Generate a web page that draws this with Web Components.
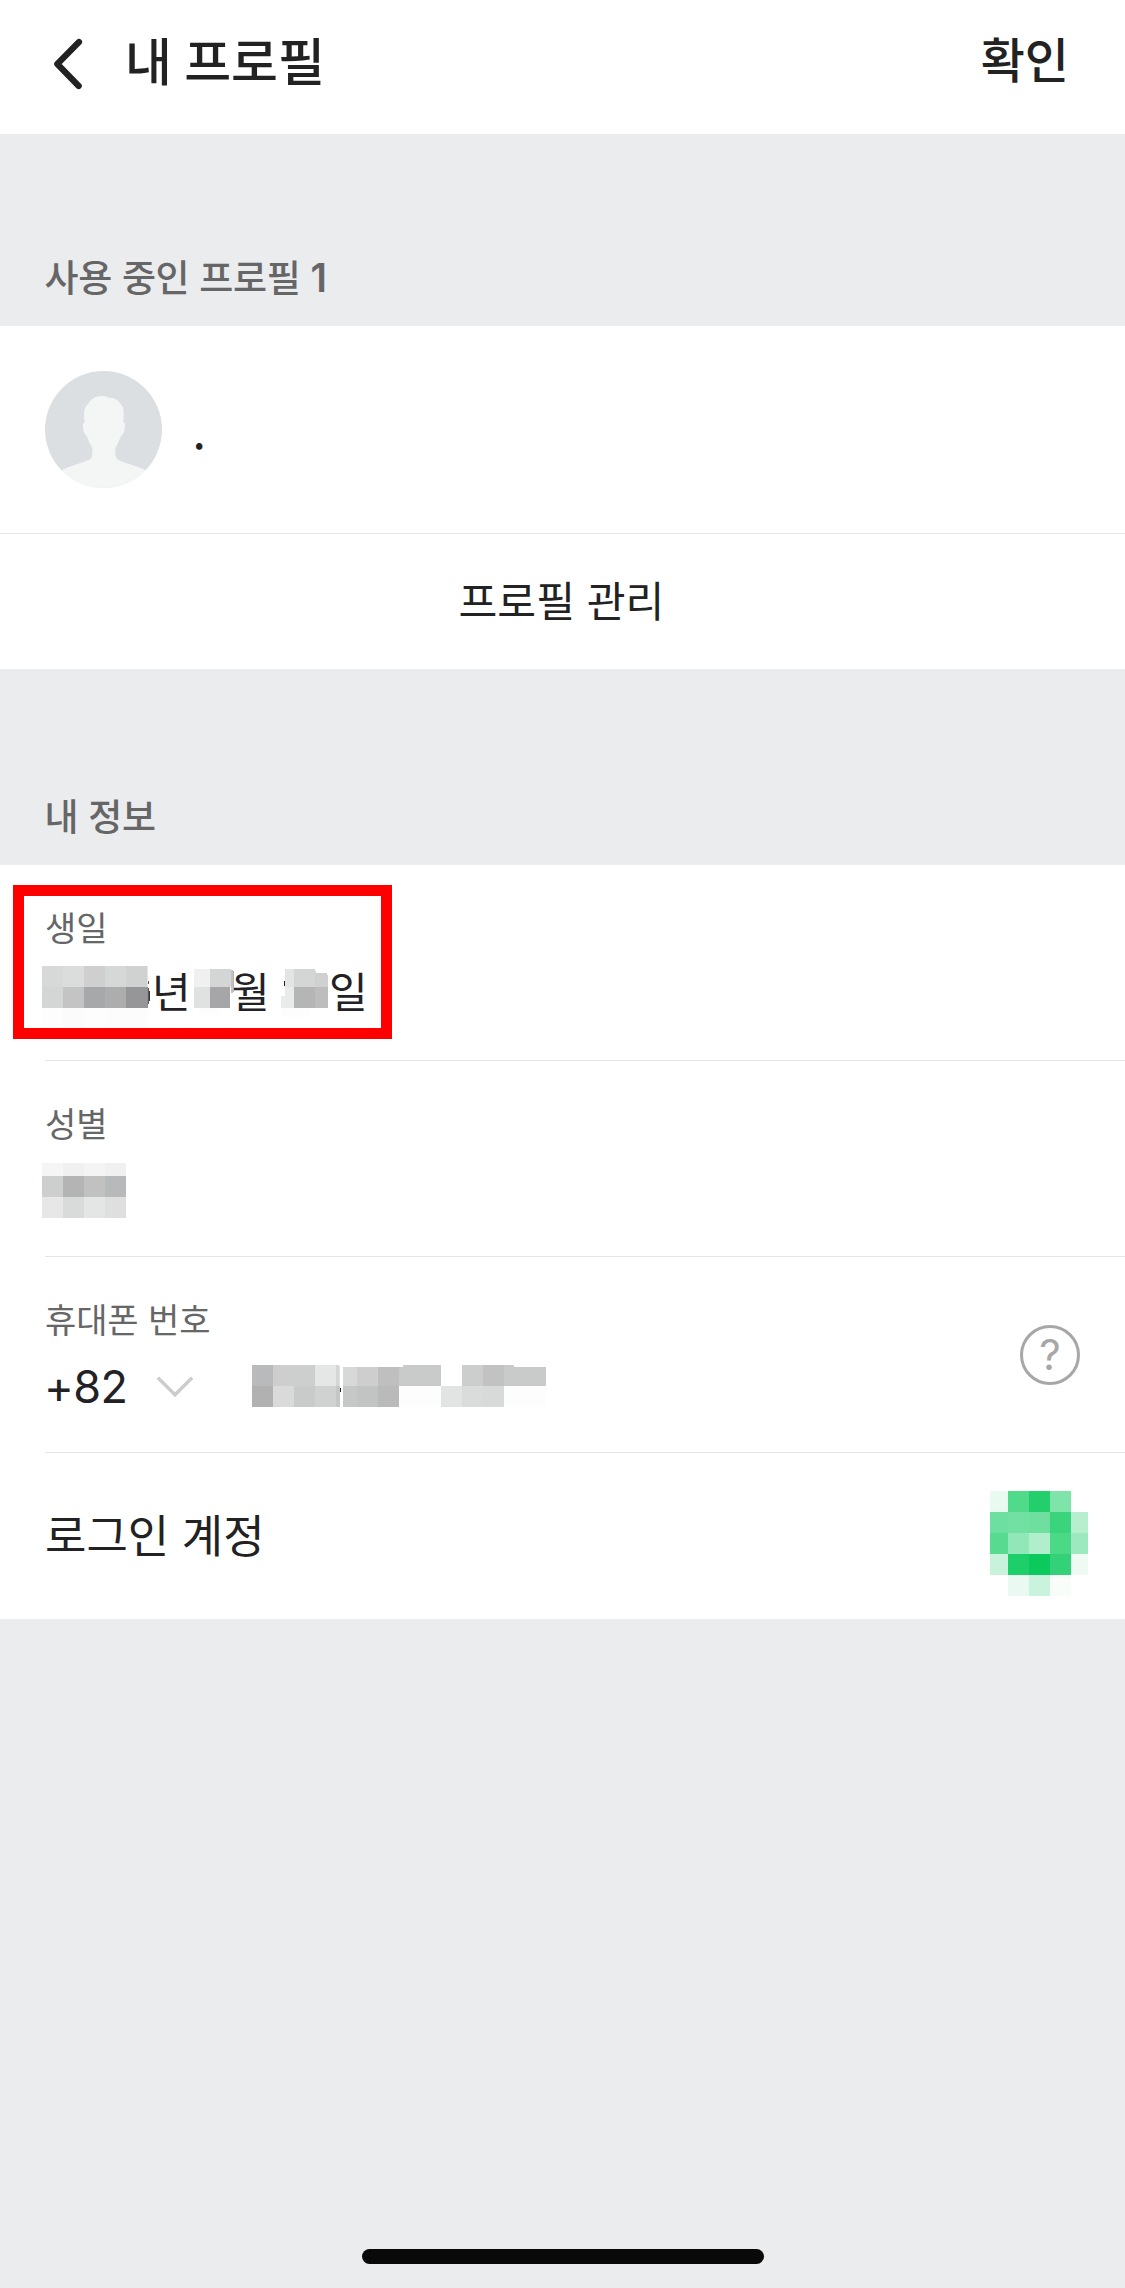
<!DOCTYPE html>
<html lang="ko">
<head>
<meta charset="utf-8">
<title>내 프로필</title>
<style>
html, body { margin: 0; background: #ebecee; }
body { width: 1125px; height: 2288px; overflow: hidden; font-family: "Noto Sans CJK KR", "Liberation Sans", sans-serif; color: #222; }
</style>
</head>
<body>
<profile-page></profile-page>
<script>
const define = (name, html, setup) => customElements.define(name, class extends HTMLElement {
  constructor() {
    super();
    this.attachShadow({ mode: 'open' }).innerHTML = html;
  }
  connectedCallback() { if (setup) setup(this, this.shadowRoot); }
});

/* Cells are [x, y, width, height, colour]; w and h give the size in the flow. */
const mosaics = {
  year: { w: 110, h: 62, cells: [
    [0,0,21,21,'#d7d9d8'],[21,0,21,21,'#dbdddc'],[42,0,21,21,'#cfcfcf'],[63,0,21,21,'#d6d8d7'],[84,0,21,21,'#d0d2d1'],[105,0,1,21,'#e4e5e5'],
    [106,15,1,3,'#55555a'],[105,21,1,21,'#8f8f91'],[106,22,1,16,'#55555a'],[107,25,1,10,'#333338'],
    [0,21,21,21,'#d4d6d5'],[21,21,21,21,'#c4c4c4'],[42,21,21,21,'#a7a8aa'],[63,21,21,21,'#adadad'],[84,21,21,21,'#969698'],
    [0,42,21,20,'#fdfdfd'],[21,42,21,20,'#fbfbfb'],[42,42,21,20,'#fdfdfd'],[63,42,43,20,'#fcfcfc']] },
  month: { w: 37, h: 62, cells: [
    [0,3,16,18,'#f0f0f0'],[16,3,21,18,'#d4d6d5'],[37,4,2,23,'#c2c2c2'],[39,5,1,21,'#b4b4b4'],
    [0,21,16,21,'#e0e2e1'],[16,21,20,21,'#a6a6a8'],[5,42,20,7,'#fdfdfd']] },
  day: { w: 48, h: 62, cells: [
    [3,15,1,5,'#222'],[4,3,9,18,'#e4e4e4'],[13,3,21,18,'#d4d6d5'],[34,5,1,16,'#d0d0d0'],[35,7,11,14,'#d0d0d0'],[46,9,1,12,'#d0d0d0'],
    [4,21,9,21,'#e9ebea'],[0,30,4,12,'#e9ebea'],[13,21,21,21,'#b5b5b5'],[34,21,13,21,'#bdbdbd'],[0,42,28,9,'#fdfdfd']] },
  gender: { w: 84, h: 55, cells: [
    [0,0,21,13,'#f5f5f5'],[21,0,21,13,'#f0f0f0'],[42,0,21,13,'#f4f4f4'],[63,0,21,13,'#f0f0f0'],
    [0,13,21,21,'#cdcfce'],[21,13,21,21,'#b4b4b4'],[42,13,21,21,'#c1c1c1'],[63,13,21,21,'#b8b9bb'],
    [0,34,21,21,'#e7e7e7'],[21,34,21,21,'#d9dbda'],[42,34,21,21,'#e4e6e5'],[63,34,21,21,'#dfdfdf']] },
  phone: { w: 298, h: 42, cells: [
    [0,0,4,42,'#fdfdfd'],
    [4,0,21,21,'#b9babc'],[25,0,21,21,'#cecece'],[46,0,21,21,'#cdcfce'],[67,0,21,21,'#e5e7e6'],[88,0,3,21,'#d4d5d5'],[91,1,1,20,'#e0e0e0'],
    [4,21,21,21,'#b1b1b1'],[25,21,21,21,'#dadada'],[46,21,21,21,'#c9cbca'],[67,21,21,21,'#d0d2d1'],[88,21,4,21,'#c5c7c6'],[92,23,1,4,'#222'],
    [95,2,14,19,'#d7d9d8'],[109,2,21,19,'#cecece'],[130,2,21,19,'#bfbfbf'],[151,2,4,19,'#c9cbca'],[155,0,38,21,'#c9cbca'],[151,2,3,2,'#c5c5c5'],
    [95,21,14,21,'#c6c8c7'],[109,21,21,21,'#c2c4c3'],[130,21,21,21,'#bababa'],[151,21,42,21,'#fdfdfd'],
    [214,0,21,21,'#cccecd'],[235,0,21,21,'#c2c2c2'],[256,0,10,21,'#c9cbca'],[266,2,32,19,'#c9cbca'],
    [193,21,21,21,'#e2e4e3'],[214,21,21,21,'#dadcdb'],[235,21,21,21,'#d8dad9'],[256,21,42,21,'#fdfdfd']] },
  account: { w: 98, h: 105, cells: [
    [0,0,18,21,'#e9faf0'],[18,0,21,21,'#52da8b'],[39,0,21,21,'#22cf6b'],[60,0,21,21,'#7ee4a9'],
    [0,21,18,21,'#6ddfa0'],[18,21,21,21,'#72e0a3'],[39,21,21,21,'#6fdf9f'],[60,21,21,21,'#39d47b'],[81,21,17,21,'#b5efce'],
    [0,42,18,21,'#58da91'],[18,42,21,21,'#91e7b7'],[39,42,21,21,'#b1eecb'],[60,42,21,21,'#4bd887'],[81,42,17,21,'#9de9bf'],
    [0,63,18,21,'#c8f3da'],[18,63,21,21,'#1dcf69'],[39,63,21,21,'#0bc95d'],[60,63,21,21,'#34d278'],[81,63,17,21,'#f0faf5'],
    [18,84,21,21,'#eafaf2'],[39,84,21,21,'#c9f3dc'],[60,84,21,21,'#f8fdfa']] }
};
define('mosaic-patch', `<style>:host{display:block;flex:none;position:relative;z-index:1}svg{display:block;overflow:visible}</style>`, (el, root) => {
  const m = mosaics[el.getAttribute('name')];
  root.innerHTML += `<svg width="${m.w}" height="${m.h}" shape-rendering="crispEdges">${m.cells.map(c =>
    `<rect x="${c[0]}" y="${c[1]}" width="${c[2]}" height="${c[3]}" fill="${c[4]}"/>`).join('')}</svg>`;
});

define('top-bar', `<style>
:host{display:flex;align-items:center;height:134px;background:#fff;box-sizing:border-box;padding:0 56px 16px 50px}
svg{display:block;flex:none;margin-top:10px}
h1{margin:0 auto 0 39px;font-size:51px;font-weight:500;line-height:70px;word-spacing:-2px;white-space:nowrap}
button{all:unset;font-size:48px;font-weight:500;line-height:70px;margin-top:-4px}
</style>
<svg width="36" height="54" viewBox="50 37 36 54"><path d="M79 42L57.3 64L78.7 86" fill="none" stroke="#222" stroke-width="6.2" stroke-linecap="round" stroke-linejoin="round"/></svg>
<h1><slot></slot></h1><button><slot name="action"></slot></button>`);

define('section-title', `<style>
:host{display:flex;align-items:flex-end;box-sizing:border-box;padding:0 45px 23px 44.5px;color:#666}
h2{margin:0;font-size:37px;font-weight:500;line-height:54px;letter-spacing:-.35px;white-space:nowrap}
::slotted(b){font-family:Inter,sans-serif;font-size:39px;font-weight:600;line-height:0}
</style><h2><slot></slot></h2>`);

define('user-avatar', `<style>:host{display:block;flex:none}svg{display:block}</style>
<svg width="117" height="117" viewBox="135 153 351 351"><defs><clipPath id="c"><circle cx="310.5" cy="328.5" r="175.5"/></clipPath></defs>
<g clip-path="url(#c)"><rect x="135" y="153" width="351" height="351" fill="#dbdfe2"/>
<path fill="#f4f6f6" d="M187 450C207 438 244 431 270 418C277 412 278 400 277 383C270 370 264 362 262 350C253 343 248 330 249 312Q250 308 255 307C250 290 252 270 257 260C270 245 278 228 305 228C318 228 322 233 330 234C345 233 352 240 360 249C375 265 372 285 369 307Q374 306 375 312C375 330 370 345 361 350C358 362 353 373 346 384C345 400 346 412 354 419C380 432 415 438 436 450V504H187Z"/></g></svg>`);

define('profile-card', `<style>
:host{display:block;background:#fff}
.who{display:flex;align-items:center;height:207px;padding:0 45px;border-bottom:1px solid #e5e5e5}
.name{margin-left:30.5px;font-size:48px;line-height:60px;margin-top:-1px}
.manage{display:flex;justify-content:center;align-items:center;height:135px;font-size:42.2px;line-height:60px;box-sizing:border-box;padding-bottom:6px;padding-right:2px}
</style><div class="who"><user-avatar></user-avatar><div class="name"><slot name="name"></slot></div></div>
<div class="manage"><slot></slot></div>`);

define('info-row', `<style>
:host{display:flex;position:relative;height:196px;padding-left:45px;background:#fff}
.inner{flex:1;display:flex;align-items:center;justify-content:space-between;border-bottom:1px solid #e5e5e5;padding-right:45px}
.main{align-self:flex-start;padding-top:42px}
.label{font-size:34px;line-height:40px;color:#666;letter-spacing:-.1px;white-space:nowrap}
.value{display:flex;margin-top:19px;font-size:42px;line-height:47px}
</style><div class="inner"><div class="main"><div class="label"><slot name="label"></slot></div><div class="value"><slot></slot></div></div><slot name="end"></slot></div><slot name="mark"></slot>`);

define('birth-date', `<style>:host{display:flex;height:44px;margin-left:-3px;color:#222226}
span{display:block;flex:none;width:39px;white-space:nowrap}</style>
<mosaic-patch name="year"></mosaic-patch><span>년</span>
<mosaic-patch name="month" style="margin-left:3px"></mosaic-patch><span>월</span>
<mosaic-patch name="day" style="margin-left:11px"></mosaic-patch><span>일</span>`);

define('highlight-frame', `<style>:host{position:absolute;z-index:2;left:13px;top:20px;width:379px;height:154px;box-sizing:border-box;border:11px solid #f00}</style>`);

define('country-code', `<style>:host{display:flex;align-items:center;height:58px;margin-left:-1px}
b{font:400 45px Inter,sans-serif;line-height:60px;letter-spacing:-.6px;width:113px;color:#222226}svg{display:block}</style>
<b><slot></slot></b><svg width="36" height="24" viewBox="0 0 36 24"><path d="M.9 2.7L18 19.8L35.1 2.7" fill="none" stroke="#ccc" stroke-width="3.4"/></svg>`);

define('help-button', `<style>:host{display:flex;align-items:center;justify-content:center;flex:none;box-sizing:border-box;width:60px;height:60px;border:3px solid #a7a7a7;border-radius:50%;color:#a7a7a7;font:400 42px/54px Inter,sans-serif}</style><span>?</span>`);

define('account-row', `<style>:host{display:flex;justify-content:space-between;height:166px;box-sizing:border-box;padding:0 37px 0 45px;background:#fff}
div{font-size:45px;line-height:162px}mosaic-patch{margin-top:38px}</style><div><slot></slot></div><mosaic-patch name="account"></mosaic-patch>`);

define('home-indicator', `<style>:host{display:block;width:402px;height:15px;border-radius:8px;background:#090909;margin:auto auto 24px 362px}</style>`);

define('profile-page', `<style>:host{display:flex;flex-direction:column;width:1125px;height:2288px;background:#ebecee}</style>
<top-bar>내 프로필<span slot="action">확인</span></top-bar>
<section-title style="height:192px">사용 중인 프로필 <b>1</b></section-title>
<profile-card><span slot="name">.</span>프로필 관리</profile-card>
<section-title style="height:196px">내 정보</section-title>
<info-row><span slot="label">생일</span><birth-date></birth-date><highlight-frame slot="mark"></highlight-frame></info-row>
<info-row><span slot="label">성별</span><mosaic-patch name="gender" style="margin:1px 0 0 -3px"></mosaic-patch></info-row>
<info-row><span slot="label">휴대폰 번호</span><country-code>+82</country-code><mosaic-patch name="phone" style="margin:7px 0 0 55px"></mosaic-patch><help-button slot="end"></help-button></info-row>
<account-row>로그인 계정</account-row>
<home-indicator></home-indicator>`);
</script>
</body>
</html>
